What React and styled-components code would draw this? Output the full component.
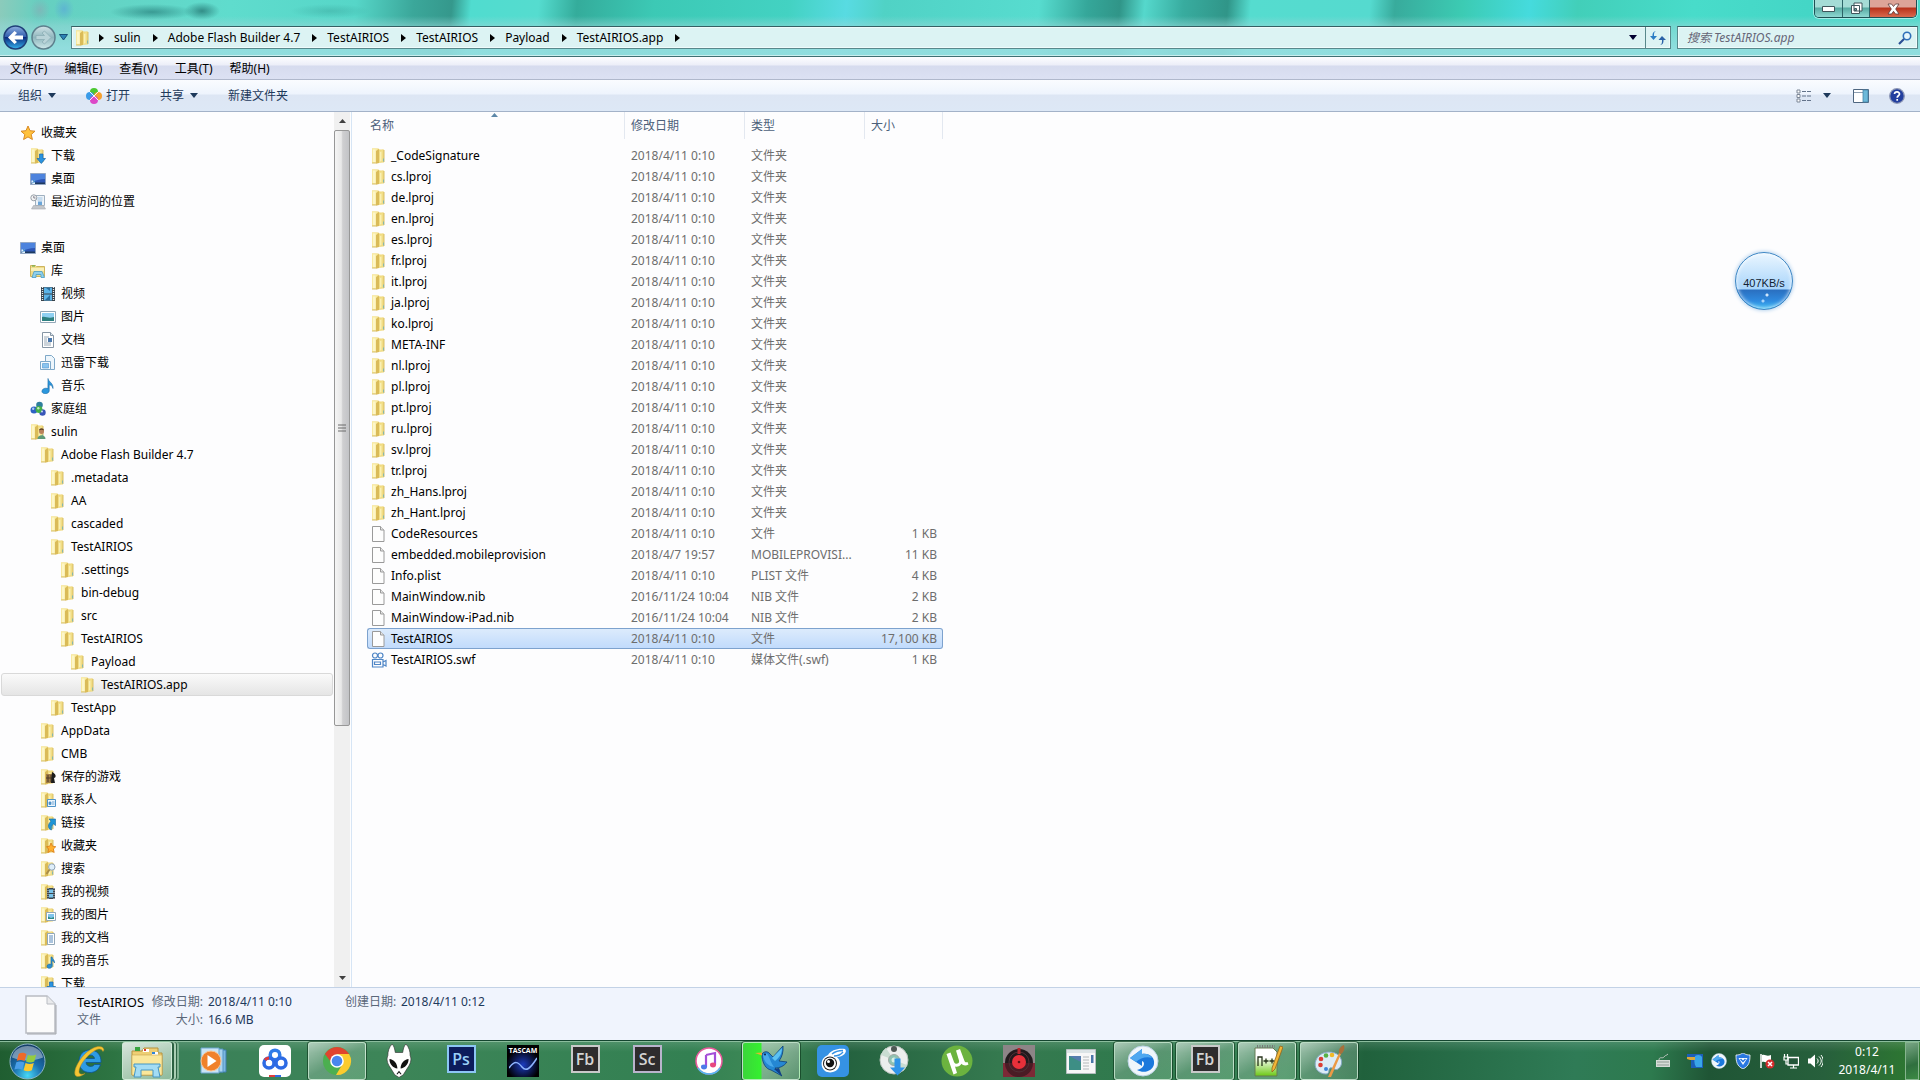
import React from "react";
import styled, { createGlobalStyle, css } from "styled-components";

const GlobalStyle = createGlobalStyle`
  * { box-sizing: border-box; }
  html, body { margin: 0; }
  body, button, input, table {
    font-family: "Noto Sans", "Noto Sans CJK SC", sans-serif;
    font-size: 12px;
    line-height: 16px;
  }
  button { border: 0; padding: 0; background: none; color: inherit; cursor: default; }
  a { color: inherit; text-decoration: none; cursor: default; }
  svg { display: block; flex: none; }
  ul { list-style: none; margin: 0; padding: 0; }
`;

/* ---------- layout ---------- */

const Desktop = styled.div`
  display: flex;
  flex-direction: column;
  height: 100vh;
  overflow: hidden;
  background: #fdfdfe;
  color: #000;
`;

const Glass = styled.header`
  display: flex;
  flex-direction: column;
  padding-bottom: 6px;
  border-bottom: 1px solid #3e6f73;
  box-shadow: inset 0 -1px 0 #c9eeee;
  background:
    linear-gradient(180deg, transparent 0 16px, rgba(150, 215, 215, 0.55) 26px, rgba(150, 222, 224, 0.9) 48px),
    radial-gradient(ellipse 42px 8px at 152px 12px, rgba(25, 105, 105, 0.55), transparent),
    radial-gradient(ellipse 18px 9px at 202px 11px, rgba(20, 90, 90, 0.6), transparent),
    radial-gradient(ellipse 10px 12px at 64px 9px, rgba(90, 170, 215, 0.7), transparent),
    radial-gradient(ellipse 10px 12px at 40px 10px, rgba(140, 170, 180, 0.6), transparent),
    radial-gradient(ellipse 40px 7px at 330px 11px, rgba(35, 125, 120, 0.25), transparent),
    linear-gradient(95deg, #8ccbbb 0, #66cfc0 2%, #5fdccd 12%, #56d6c8 18.500%, #3ba79a 21.500%, #35988c 23.500%,
      #50dccf 24.500%, #55dccf 28%, #34ac9b 30%, #3cc9b5 34%, #43d2c2 41%, #58dbe2 44%, #50d2c5 46%,
      #57dccf 54%, #35a79a 56.500%, #309588 58.200%, #55d8cc 59.500%, #38ac9f 61.500%, #309588 63.800%, #55dccf 65%,
      #55dacf 71.200%, #38ab9c 72.500%, #3ccbb3 76%, #45dbdd 79.500%, #42cfb9 82%, #48dcca 88%, #44d6c6 94%, #4adac9 100%);
`;

const CaptionRow = styled.div`
  display: flex;
  justify-content: flex-end;
  height: 25px;
  padding-right: 3px;
`;

const Caption = styled.div`
  display: flex;
  height: 18px;
  border: 1px solid #1f5054;
  border-top: 0;
  border-radius: 0 0 5px 5px;
  box-shadow: 0 0 0 1px rgba(220, 250, 250, 0.6);
  overflow: hidden;
`;

const CaptionButton = styled.button`
  display: grid;
  place-items: center;
  width: ${(p) => (p.$close ? 47 : 27)}px;
  background: ${(p) =>
    p.$close
      ? "linear-gradient(#dda498 0 7px, #b8321b 8px, #d9694d)"
      : "linear-gradient(#a5dcd6 0 7px, #57aaa2 8px, #8fd8d2)"};
  & + & { border-left: 1px solid #2d6468; }
`;

const NavRow = styled.div`
  display: flex;
  align-items: center;
  height: 25px;
  padding: 0 2px 0 3px;
`;

const RoundButton = styled.button`
  display: grid;
  place-items: center;
  width: 25px;
  height: 25px;
  margin-right: 3px;
`;

const fieldBox = css`
  display: flex;
  align-items: center;
  height: 23px;
  border: 1px solid #58888b;
  border-top-color: #355f63;
  background: #dcf3f3;
  box-shadow: inset 0 0 0 1px #effbfb;
`;

const Address = styled.nav`
  ${fieldBox}
  flex: 1;
  margin-left: 3px;
  padding-left: 3px;
`;

const Crumbs = styled.ul`
  display: flex;
  flex: 1;
  align-items: center;
`;

const Crumb = styled.li`
  display: flex;
  align-items: center;
  gap: 12px;
  padding-left: 10px;
  &:first-child { padding-left: 8px; }
`;

const SquareButton = styled.button`
  display: grid;
  place-items: center;
  width: 25px;
  height: 21px;
  ${(p) => p.$divided && "border-left: 1px solid #58888b;"}
`;

const SearchBox = styled.label`
  ${fieldBox}
  width: 241px;
  margin-left: 6px;
  padding: 0 5px 0 9px;
`;

const SearchInput = styled.input`
  flex: 1;
  min-width: 0;
  border: 0;
  padding: 0;
  outline: 0;
  background: none;
  font-style: italic;
  &::placeholder { color: #667; opacity: 1; }
`;

const MenuBar = styled.nav`
  display: flex;
  align-items: center;
  gap: 17px;
  height: 23px;
  padding: 1px 10px 0;
  border-bottom: 1px solid #b0b8cc;
  background: linear-gradient(#fdfdff 0, #eceef8 8px, #d6dbee 9px, #dce1f3 100%);
`;

const ToolBar = styled.div`
  display: flex;
  align-items: center;
  height: 32px;
  padding: 0 15px 0 18px;
  border-bottom: 1px solid #a3b2c8;
  background: linear-gradient(#fafcff 0, #eef4fd 14px, #dde6f4 15px, #dde8f6 100%);
  color: #1e395b;
`;

const ToolButton = styled.button`
  display: flex;
  align-items: center;
  gap: ${(p) => p.$gap || 4}px;
  margin-right: ${(p) => p.$after || 0}px;
`;

const Spacer = styled.div`
  flex: 1;
`;

const Main = styled.main`
  display: flex;
  flex: 1;
  min-height: 0;
`;

/* ---------- folder tree ---------- */

const TreePane = styled.nav`
  width: 334px;
  padding: 9px 1px 0;
  overflow: hidden;
`;

const TreeItem = styled.li`
  height: 23px;
  ${(p) => p.$spaced && "margin-bottom: 23px;"}
`;

const TreeLink = styled.a`
  display: flex;
  align-items: center;
  gap: 5px;
  height: 23px;
  padding-left: ${(p) => 18 + p.$level * 10}px;
  border: 1px solid transparent;
  border-radius: 3px;
  ${(p) =>
    p.$current &&
    css`
      border-color: #d9d9d9;
      background: linear-gradient(#fafafa, #e5e5e5);
    `}
`;

const ScrollBar = styled.div`
  display: flex;
  flex-direction: column;
  align-items: stretch;
  width: 16px;
  background: #f0f0f0;
`;

const ScrollArrow = styled.button`
  display: grid;
  place-items: center;
  height: 18px;
`;

const ScrollTrack = styled.div`
  flex: 1;
`;

const ScrollThumb = styled.div`
  display: grid;
  place-items: center;
  height: 71%;
  border: 1px solid #979797;
  border-radius: 2px;
  background: linear-gradient(90deg, #f5f5f5, #e8e8e8 45%, #cfcfd1 55%, #c2c3c6);
`;

/* ---------- file list ---------- */

const FilePane = styled.section`
  flex: 1;
  margin-left: 1px;
  padding-left: 15px;
  border-left: 1px solid #d6e5f5;
`;

const FileTable = styled.table`
  table-layout: fixed;
  width: 576px;
  border-collapse: separate;
  border-spacing: 0;
`;

const Th = styled.th`
  height: 33px;
  padding: 0;
  vertical-align: top;
  text-align: left;
  font-weight: 400;
  color: #4c607a;
`;

const HeadLabel = styled.div`
  display: flex;
  flex-direction: column;
  height: 27px;
  padding: 1px 6px 0 ${(p) => (p.$first ? 3 : 6)}px;
  border-right: 1px solid #e3e8f0;
`;

const SortMark = styled.span`
  display: flex;
  justify-content: center;
  height: 5px;
`;

const Td = styled.td`
  height: 21px;
  padding: 0 6px;
  overflow: hidden;
  text-overflow: ellipsis;
  white-space: nowrap;
  text-align: ${(p) => (p.$right ? "right" : "left")};
  color: #6d6d6d;
  ${(p) => p.$name && "padding-left: 4px; color: #000;"}
`;

const Tr = styled.tr`
  ${(p) =>
    p.$selected &&
    css`
      td {
        border: 1px solid #7da2ce;
        border-width: 1px 0;
        background: linear-gradient(#dcebfc, #c1dbfc);
      }
      td:first-child { border-left-width: 1px; border-radius: 3px 0 0 3px; padding-left: 3px; }
      td:last-child { border-right-width: 1px; border-radius: 0 3px 3px 0; padding-right: 5px; }
    `}
`;

const NameCell = styled.span`
  display: flex;
  align-items: center;
  gap: 4px;
`;

/* ---------- details ---------- */

const Details = styled.footer`
  display: flex;
  height: 54px;
  padding: 6px 24px;
  border-top: 1px solid #c3d2e6;
  background: #f0f4fd;
  color: #1e395b;
`;

const Facts = styled.dl`
  display: grid;
  grid-template-columns: 68px 53px 132px 51px auto;
  column-gap: 5px;
  row-gap: 2px;
  margin: 0 0 0 20px;
  align-content: start;
`;

const Fact = styled.dd`
  margin: 0;
  white-space: nowrap;
  ${(p) => p.$title && "color: #000; font-size: 13px;"}
  ${(p) => p.$dim && "color: #5a6779;"}
`;

const FactName = styled.dt`
  text-align: right;
  white-space: nowrap;
  color: #5a6779;
`;

/* ---------- speed ball ---------- */

const SpeedBall = styled.div`
  position: absolute;
  top: 252px;
  right: 127px;
  display: grid;
  place-items: center;
  width: 58px;
  height: 58px;
  padding-top: 4px;
  border: 1px solid #3d86c4;
  border-radius: 50%;
  box-shadow: 0 0 4px #9ac3e8, inset 0 0 4px #fff;
  background:
    radial-gradient(circle at 31px 42px, #cfe6fb 0 1px, transparent 2px),
    radial-gradient(circle at 27px 48px, #a9d4fa 0 1px, transparent 2px),
    linear-gradient(#eaf6ff 0, #a9d5fb 36px, #2a6fc0 37px, #2f8be0 48px, #41bdf3 100%);
  color: #123;
  font-family: "Liberation Sans", Arial, sans-serif;
  font-size: 11px;
`;

/* ---------- taskbar ---------- */

const TaskBar = styled.footer`
  display: flex;
  height: 39px;
  border-top: 1px solid #8bbd9d;
  box-shadow: 0 -1px 0 #14452f;
  z-index: 1;
  background:
    linear-gradient(180deg, rgba(255, 255, 255, 0.12), transparent 10px),
    linear-gradient(95deg, #1f5d30 0, #2d7442 6%, #3a8058 9%, #3d8558 20%, #338052 36%, #3f8a57 40%, #24623f 44%,
      #35794f 52%, #2f7a4d 60%, #3b8557 67%, #20613c 71%, #2f7b56 82%, #2d7a4e 86%, #1f5535 89%, #27603c 95%, #2e7a30 100%);
  color: #fff;
`;

const StartButton = styled.button`
  display: grid;
  place-items: center;
  width: 58px;
  padding-right: 4px;
`;

const TaskButton = styled.button`
  display: grid;
  place-items: center;
  width: 58px;
  margin: 0 2px;
  ${(p) =>
    p.$open &&
    css`
      border: 1px solid rgba(214, 240, 220, 0.75);
      border-radius: 3px;
      box-shadow: 0 0 0 1px rgba(10, 50, 25, 0.6);
      background: linear-gradient(150deg, rgba(255, 255, 255, 0.55), rgba(255, 255, 255, 0.2) 50%, rgba(190, 240, 200, 0.25));
    `}
  ${(p) =>
    p.$stack &&
    css`
      width: 50px;
      margin-right: 10px;
      background: linear-gradient(150deg, rgba(255, 255, 255, 0.8), rgba(225, 245, 225, 0.5));
      box-shadow: 2px 0 0 #2c6142, 4px 0 0 #a9ceb3, 5px 0 0 #2c6142, 7px 0 0 #7fb191;
    `}
  ${(p) =>
    p.$busy &&
    css`
      background:
        linear-gradient(90deg, #3bd53b 0, #35f02f 18px, transparent 19px),
        linear-gradient(150deg, rgba(255, 255, 255, 0.5), rgba(255, 255, 255, 0.2));
    `}
`;

const Badge = styled.span`
  display: grid;
  place-items: center;
  width: 29px;
  height: 28px;
  margin-bottom: 4px;
  border: 2px solid ${(p) => p.$line};
  background: ${(p) => p.$fill};
  color: ${(p) => p.$ink};
  font-family: "Open Sans", sans-serif;
  font-size: 16px;
  font-weight: 600;
`;

const Tascam = styled.span`
  display: flex;
  flex-direction: column;
  align-items: center;
  width: 32px;
  height: 32px;
  background: radial-gradient(circle at 50% 62%, #1c3cc0, #000 65%);
  color: #fff;
  font: 700 7px/11px "Open Sans", sans-serif;
`;

const Tray = styled.div`
  display: flex;
  align-items: center;
  gap: 8px;
`;

const TrayButton = styled.button`
  width: 16px;
  height: 16px;
  &:first-child { margin-right: 8px; }
`;

const Clock = styled.button`
  width: 82px;
  padding-left: 6px;
  line-height: 18px;
  text-align: center;
`;

const ShowDesktop = styled.button`
  width: 14px;
  margin-right: 1px;
  border: 1px solid #86b58e;
  background: linear-gradient(160deg, #79a585, #2f6f3e 60%, #3c8a44);
`;

/* ---------- drawings ---------- */

const Svg = ({ s = 16, children, v = 16 }) => (
  <svg width={s} height={s} viewBox={`0 0 ${v} ${v}`} aria-hidden="true">{children}</svg>
);

const FolderShape = () => (
  <>
    <path d="M1 .5h6.500l1 1h4.500v13H1z" fill="#efd87c" />
    <path d="M1 .5h5.500v14.500H1z" fill="#f8eaa0" />
    <path d="M2 1.500h2.500v12.500H2z" fill="#fdf6c9" />
    <path d="M5 3l3-2v14l-3 .8z" fill="#dabb58" />
    <path d="M8 3l4-1.500v12.500L8 15z" fill="#f1dd85" />
    <path d="M9 4l1.500-.6v9.500L9 13.500z" fill="#faf0b4" />
    <path d="M13 2v12M1 15h4" stroke="#d8bf69" />
    <path d="M12.500 10.500v3" stroke="#86b7ad" />
  </>
);

const overlays = {
  download: <path d="M9.500 6h3.500v4.500h2.500L11.300 15.500 7 10.500h2.500z" fill="#2a93e0" stroke="#1767ad" strokeWidth=".7" />,
  user: <><circle cx="11.500" cy="7.500" r="2.500" fill="#b9825d" /><path d="M7.500 15c0-5 8-5 8 0z" fill="#5d9a78" /><path d="M9 6.500c0-3 5-3 5 0-2-1-3-1-5 0z" fill="#5b3c22" /></>,
  game: <><path d="M6 5h7v9H6z" fill="#a07c46" /><path d="M8 6v7M11 6v7M6 9h7" stroke="#4a3826" /><path d="M12 3c5 2 4 6 2 6l1 5h-4z" fill="#1c1c1c" /></>,
  contact: <><path d="M7.500 7.500h8v7h-8z" fill="#eef6fd" stroke="#4e93c8" /><path d="M9 10h2v2.500H9zM12 10h2.500M12 12h2.500" fill="#4e93c8" stroke="#4e93c8" strokeWidth=".8" /></>,
  link: <path d="M9 4h6.500v6.500L13.500 9c-2 1.500-2.500 3-2 6-4-1-4-6-.5-8.800z" fill="#1f95d6" stroke="#126a9f" strokeWidth=".6" />,
  star: <path d="M11 5l1.500 3.200 3.300.5-2.400 2.300.8 3.500-3.200-1.700-3 1.700.6-3.500L6.500 8.700 9.700 8.200z" fill="#ffb02e" stroke="#d97a14" strokeWidth=".8" />,
  search: <><circle cx="11.800" cy="6" r="3.200" fill="#dfeefa" stroke="#8fa3b5" /><path d="M9.500 8.500L6.500 13" stroke="#a88c4a" strokeWidth="2" /></>,
  video: <><path d="M7 4h8v11H7z" fill="#3b4650" /><path d="M9 5.500h4v3.500H9zM9 10h4v3.500H9z" fill="#79c3ea" /><path d="M8 4v11M14 4v11" stroke="#dfe6ea" strokeWidth=".9" strokeDasharray="1 1" /></>,
  picture: <><path d="M6.500 5.500h9v8h-9z" fill="#fff" stroke="#93a8b8" /><path d="M8 7h6v5H8z" fill="#7fc4ec" /><path d="M8 12V9.500l3 1.500 3-1v2z" fill="#2d8b8a" /></>,
  doc: <><path d="M7.500 3.500h7v11h-7z" fill="#fff" stroke="#93a8b8" /><path d="M9 6h4M9 8h4M9 10h4M9 12h4" stroke="#5688bb" /></>,
  music: <path d="M12 4c.3 2 3 3 2.500 6-.5-1.500-1.500-2-2.500-2.200V13c0 3-5 3-5 .5s3-3 4-2V4z" fill="#2c8fd0" stroke="#1b6ba5" strokeWidth=".6" />,
};

const Desk = () => (
  <><path d="M.5 2.500h15v11H.5z" fill="#2d55b4" stroke="#93a7c4" /><path d="M1 3h14v5c-5 0-9 1-14 4z" fill="#4d83dd" /><path d="M1 11.500h14V13H1z" fill="#1e3a5f" /><path d="M1.500 9.500h3.500V13H1.500z" fill="#e3f0fb" /><path d="M2 12.500l2.500-2.500M3 9.800h1.700v1.700" stroke="#2a7ac0" fill="none" /></>
);

const shapes = {
  star: <path d="M8 1l2 4.700 5 .5-3.800 3.300 1.200 5L8 11.900 3.600 14.500l1.200-5L1 6.200l5-.5z" fill="#ffc23d" stroke="#d98a24" strokeLinejoin="round" />,
  desk: <Desk />,
  recent: <><path d="M5.500 1.500h9v10h-9z" fill="#eef3f8" stroke="#9fb0c0" /><path d="M7.500 4h5M7.500 6h5" stroke="#9fc4e4" /><path d="M8 7.500h4v3.500H8z" fill="#6aa5d8" /><path d="M3.500 11.500h10l2 3.500h-14z" fill="#c3c6ca" stroke="#a5a9ae" strokeWidth=".6" /><circle cx="3.800" cy="3.800" r="3" fill="#f4f4f4" stroke="#98a0a8" /><path d="M3.800 2v2h1.700" stroke="#667" fill="none" strokeWidth=".8" /></>,
  library: <><path d="M.5 2.500h5l1 1h8v10H.5z" fill="#f0dc8a" stroke="#cdb45e" /><path d="M2 3h3" stroke="#5aa948" /><path d="M1 5h13v3H1z" fill="#f9efb8" /><path d="M2 14.500l2-6h8l2.500 6h-3.500v-3H6v3z" fill="#8fd0ee" stroke="#4a9cc6" strokeWidth=".8" /></>,
  video: <><path d="M1 1h14v14H1z" fill="#39434c" /><path d="M4 1.500h8v6H4zM4 8.500h8v6H4z" fill="#5cb4e8" /><path d="M6 2l4 3v-3zM5 14l5-5v5z" fill="#2a6e9e" /><path d="M2.500 1v14M13.500 1v14" stroke="#e8eef2" strokeWidth="1.300" strokeDasharray="1 1" /></>,
  picture: <><path d="M.5 2.500h15v11H.5z" fill="#fff" stroke="#93a8b8" /><path d="M2 4h12v8H2z" fill="#8fd0f2" /><path d="M2 12V8c4-1 6 2 12 0v4z" fill="#2d8080" /></>,
  doc: <><path d="M2.500.5h8l3 3v12h-11z" fill="#fff" stroke="#8796a5" /><path d="M10.500.5v3h3" fill="#dde6ee" stroke="#8796a5" /><path d="M4 5h5M4 7h3M4 9h3M4 11h7M4 13h7" stroke="#9aa8b5" /><path d="M8 6h4v4H8z" fill="#4a78ad" /></>,
  thunder: <><path d="M5.500.5h6l3 3v11h-9z" fill="#eef6fc" stroke="#7ea8c8" /><path d="M.5 6.500h10v8H.5z" fill="#f6fafd" stroke="#7ea8c8" /><path d="M2.500 8.500h6v4.500h-6z" fill="#8ac4ef" stroke="#4d94cf" strokeWidth=".6" /></>,
  music: <path d="M8 .5c.5 3.500 5.500 4.500 5 10-.8-3-2.500-3.500-3.800-3.700V13c-.3 3.500-7.500 3.500-7.300.2.200-2.600 3.600-3.700 6-2.600z" fill="#2b97dd" stroke="#1c6ba6" strokeWidth=".6" />,
  home: <><circle cx="4" cy="9" r="3.500" fill="#2d62c4" /><circle cx="9.500" cy="4" r="3.300" fill="#2f7f9d" /><circle cx="12.500" cy="11.500" r="3.200" fill="#3856b8" /><circle cx="9" cy="8.500" r="3.400" fill="#44b04a" /><circle cx="3.200" cy="7.800" r="1.200" fill="#aecbf6" /><circle cx="8.300" cy="7.300" r="1.200" fill="#c3ecbb" /><circle cx="12" cy="10.500" r="1" fill="#c8d2f8" /></>,
  file: <><path d="M1.500.5h8l3.500 3.500v11.500H1.500z" fill="#fdfdfd" stroke="#9a9a9a" /><path d="M9.500.5v3.500H13" fill="#e6e6e6" stroke="#9a9a9a" /></>,
  swf: <g fill="none" stroke="#4f86c6" strokeWidth="1.200"><circle cx="4" cy="3.500" r="2.500" /><circle cx="9.500" cy="3.500" r="2.500" /><path d="M1.500 7.500h10.500v7.500H1.500zM3.500 10h6v2.500h-6zM12 10l3-1.500v5.500l-3-1.500" /></g>,
};

const Icon = ({ name }) => {
  if (name === "folder") return <Svg><FolderShape /></Svg>;
  if (name.startsWith("f:")) return <Svg><FolderShape />{overlays[name.slice(2)]}</Svg>;
  return <Svg>{shapes[name]}</Svg>;
};

const Caret = ({ color = "#1e395b" }) => (
  <svg width="8" height="5" viewBox="0 0 8 5" aria-hidden="true"><path d="M0 0h8L4 5z" fill={color} /></svg>
);
const CrumbArrow = () => (
  <svg width="5" height="8" viewBox="0 0 5 8" aria-hidden="true"><path d="M0 0l5 4-5 4z" fill="#000" /></svg>
);

const BackIcon = () => (
  <Svg s={25} v={25}>
    <defs><linearGradient id="bk" x2="0" y2="1"><stop stopColor="#8fb0e0" /><stop offset=".48" stopColor="#2f5cad" /><stop offset=".5" stopColor="#0b2d80" /><stop offset="1" stopColor="#35b3ee" /></linearGradient></defs>
    <circle cx="12.500" cy="12.500" r="11.500" fill="url(#bk)" stroke="#1f3f78" strokeWidth="1.500" />
    <path d="M5 12.500l6.500-6.500 2.500 2-2.500 2.500H20v4h-8.500L14 17l-2.500 2z" fill="#fff" />
  </Svg>
);
const ForwardIcon = () => (
  <Svg s={25} v={25}>
    <defs><linearGradient id="fw" x2="0" y2="1"><stop stopColor="#d3e4e8" /><stop offset=".5" stopColor="#8fb6bd" /><stop offset="1" stopColor="#cfe8ea" /></linearGradient></defs>
    <circle cx="12.500" cy="12.500" r="11.500" fill="url(#fw)" stroke="#5d7f8c" strokeWidth="1.500" />
    <path d="M20 12.500L13.500 6 11 8l2.500 2.500H5v4h8.500L11 17l2.500 2z" fill="#b9d3d8" stroke="#8cadb5" strokeWidth=".8" />
  </Svg>
);

const StartOrb = () => (
  <Svg s={37} v={38}>
    <defs><radialGradient id="orb" cx=".5" cy=".9" r=".9"><stop stopColor="#47d8f5" /><stop offset=".45" stopColor="#1a6fae" /><stop offset="1" stopColor="#123a63" /></radialGradient></defs>
    <circle cx="19" cy="19" r="18" fill="url(#orb)" stroke="#8fb5c8" />
    <path d="M3 15C6-1 32-1 35 15 25 19 13 19 3 15z" fill="#fff" opacity=".4" />
    <path d="M10 11c3-1.500 5-1.200 8 .3l-2 7.200c-3-1.400-5-1.300-8-.2z" fill="#ee6a2a" />
    <path d="M19.500 12c3 1.400 5 1.200 8.500-.3l-2 7.300c-3 1.300-5.500 1.300-8.500-.1z" fill="#95cc3f" />
    <path d="M7.500 19.800c3-1.300 5-1.200 8.200.2l-2 7.400c-3-1.400-5-1.400-8.200-.2z" fill="#4a9ee8" />
    <path d="M17 20.500c3 1.300 5.500 1.300 8.500 0l-2 7.500c-3 1.200-5.500 1.200-8.500-.1z" fill="#fbc92e" />
  </Svg>
);

const IE = () => (
  <Svg s={34} v={34}>
    <path d="M18 6c7 0 11.500 5 11 12.500H14c.3 4.500 7 5 8.500 2h6c-2 6-6 8-10.500 8C11 28.500 7 24 7 17.500S11 6 18 6zm-4 8.500h8.500c-.3-4.500-8-4.500-8.500 0z" fill="#2e9be4" stroke="#0d5391" strokeWidth=".8" />
    <path d="M32 6C31 0 21 2 13 10 4 19 0 31 5 32.500c3 .5 6-1.500 8-3-4 1.500-6 .5-6-2 0-5 6-14 13-19 5-4 9-5 11-1z" fill="#f4c534" stroke="#b58a1d" strokeWidth=".5" />
  </Svg>
);
const Explorer = () => (
  <Svg s={34} v={34}>
    <path d="M2 7h10l2-3h14v5h4v22H2z" fill="#eecf74" stroke="#b6923c" />
    <path d="M5 3h5v4H5z" fill="#37a43f" /><path d="M13 5h6v3h-6z" fill="#fff" /><path d="M14 5h2v2h-2z" fill="#d8342c" /><path d="M22 8h6v3h-6z" fill="#fff" /><path d="M22 8h3v2h-3z" fill="#3084d8" />
    <path d="M2 11h30v20H2z" fill="#fae79b" stroke="#c9a54d" strokeWidth=".6" />
    <path d="M4 20h26v3h-2l2 10h-7v-7H11v7H4l2-10H4z" fill="#a3dcf4" stroke="#4596c3" />
  </Svg>
);
const MediaPlayer = () => (
  <Svg s={30} v={30}>
    <path d="M10 4h18v22H10z" fill="#7cb8e0" stroke="#3f7eb0" /><path d="M7 3h18v23H7z" fill="#a9d4ef" stroke="#5594c2" /><path d="M3 2h18v25H3z" fill="#c9e4f5" stroke="#6ba6cf" />
    <circle cx="13" cy="15" r="10" fill="#f0812b" stroke="#f8c493" /><path d="M9.500 9l9 6-9 6z" fill="#fff" />
  </Svg>
);
const Baidu = () => (
  <Svg s={32} v={32}>
    <rect width="32" height="32" rx="5" fill="#fff" />
    <g fill="none" strokeWidth="3.500"><circle cx="16" cy="10" r="4.800" stroke="#2f7be8" /><circle cx="10" cy="18" r="5" stroke="#2d6be4" /><circle cx="22" cy="18" r="5" stroke="#2d6be4" /></g>
    <path d="M6 15a5 5 0 014-2" stroke="#e03c3c" strokeWidth="3" fill="none" /><path d="M10 30h6v2h-6z" fill="#e03c3c" /><path d="M16 30h6v2h-6z" fill="#2d6be4" />
  </Svg>
);
const Chrome = () => (
  <Svg s={30} v={30}>
    <circle cx="15" cy="15" r="14" fill="#4caf50" />
    <path d="M2.900 8A14 14 0 0115 29l5-9-5-5z" fill="#3fa757" />
    <path d="M27.100 8A14 14 0 0114 29l6.500-11L15 8z" fill="#fccb2e" /><path d="M2.900 8A14 14 0 0127.100 8H15l-6 8z" fill="#e0442f" />
    <circle cx="15" cy="15" r="6.800" fill="#fff" /><circle cx="15" cy="15" r="5.300" fill="#4a86ee" />
  </Svg>
);
const Foobar = () => (
  <Svg s={34} v={32}>
    <path d="M9.500 0c2 2 2.500 5 3 8h7c.5-3 1-6 3-8 3 3 4 7 4 11 1.500 3 .5 7-1.500 10l-5 8-4 2.500-4-2.500-5-8c-2-3-3-7-1.500-10 0-4 1-8 4-11z" fill="#fff" stroke="#333" strokeWidth=".6" />
    <path d="M7 14c4 .5 7.500 4 7.500 9-4-.5-7.500-4-7.500-9zM25 14c-4 .5-7.500 4-7.500 9 4-.5 7.500-4 7.500-9z" fill="#111" /><path d="M14 28.500l2-2.500 2 2.500" fill="none" stroke="#111" />
  </Svg>
);
const ITunes = () => (
  <Svg s={30} v={30}>
    <circle cx="15" cy="15" r="13" fill="#fff" stroke="#e85a9c" strokeWidth="1.500" /><path d="M4 22a13 13 0 0022 0" fill="none" stroke="#53b9f3" strokeWidth="1.500" />
    <path d="M12 9l9-2v12M12 9v12" stroke="#a44ed8" strokeWidth="2.200" fill="none" /><ellipse cx="10" cy="21" rx="3" ry="2.400" fill="#4d7be8" /><ellipse cx="19" cy="19" rx="3" ry="2.400" fill="#e8487f" />
  </Svg>
);
const Bird = () => (
  <Svg s={34} v={34}>
    <path d="M8 10c2-3 6-3 8 0l3 3L29 2c.5 6-1 11-4 15l8 1c-3 4-7 6-12 6l7 8-11-6c-5-1-8-6-9-13z" fill="#2587d3" stroke="#0c3f77" strokeWidth=".8" />
    <path d="M18 14L28 4c0 5-2 9-7 13z" fill="#5cc2f2" /><path d="M9 11c2-2 4-2 5 0 2 4 3 8 6 12-6-1-10-5-11-12z" fill="#49a9ea" />
    <path d="M1 9l7-.5v3z" fill="#e8b030" /><path d="M20 25l8 7-3-8z" fill="#123f86" /><circle cx="11" cy="10.500" r="1" fill="#0a2450" />
  </Svg>
);
const Eye = () => (
  <Svg s={32} v={32}>
    <rect width="32" height="32" rx="5" fill="#3592e4" />
    <path d="M11 10c3-5 10-7 17-6 3 3-2 8-8 8 3 3 4 6 2 10-2 5-9 7-14 4-5-4-5-13 3-16z" fill="#fff" />
    <circle cx="13" cy="18.500" r="7" fill="#222" /><circle cx="13" cy="18.500" r="6" fill="#fff" /><circle cx="13" cy="18" r="4.200" fill="#111" /><circle cx="11.500" cy="16.500" r="1.500" fill="#fff" />
    <path d="M15 9c3-2.500 7-3.500 11-3.500M17 11c4 0 7-1.500 9-4" stroke="#3592e4" strokeWidth="1.400" fill="none" />
  </Svg>
);
const Disc = () => (
  <Svg s={32} v={32}>
    <circle cx="15" cy="15" r="14" fill="#eceeed" stroke="#b9c2bd" /><path d="M15 15L2 10a14 14 0 015-7zM15 15l13 5a14 14 0 01-4 6z" fill="#c9dcd2" />
    <circle cx="15" cy="15" r="5.500" fill="#8fc2b2" stroke="#a0aaa4" /><circle cx="15" cy="15" r="2.500" fill="#d8efe5" /><circle cx="15" cy="4" r="3" fill="#4e5854" />
    <path d="M15.500 13.500h6v9h4.500l-7.500 8-7.500-8h4.500z" fill="#2f94e8" />
  </Svg>
);
const UTorrent = () => (
  <Svg s={32} v={32}>
    <circle cx="16" cy="16" r="15.500" fill="#6cb33f" />
    <path d="M5.500 9l4-1.500 3.500 9.500c1 3 6 2 5-1.500L15 5.500l4-1.500 4.500 12c.5 1.500 1.500 1.500 3 1l1 2.500c-3 1.500-5.500 1-7-.8-1.500 2.500-4 3.500-6.500 2.800L16 28l-3.500 1.500z" fill="#fff" />
  </Svg>
);
const RedDisc = () => (
  <Svg s={32} v={32}>
    <path d="M0 0h32v32H0z" fill="#8d8587" /><path d="M0 18h32v14H0z" fill="#7c2936" /><path d="M2 18a14 14 0 0128 0z" fill="#221a1d" /><path d="M2 18a14 14 0 0028 0z" fill="#4a1c25" /><circle cx="16" cy="17" r="10" fill="none" stroke="#503036" />
    <circle cx="16" cy="17" r="7" fill="#e8303a" /><circle cx="16" cy="17" r="1.300" fill="#5e1117" /><path d="M14.500 3h3v6h-3z" fill="#b5262e" />
  </Svg>
);
const WindowIcon = () => (
  <Svg s={30} v={30}>
    <path d="M.5 3.500h29v24H.5z" fill="#f7f7f7" stroke="#b6bfc1" /><path d="M1 4h28v3H1z" fill="#dce4e6" /><path d="M3 10h12v14H3z" fill="#3d8e85" /><path d="M3 10h12v6z" fill="#557dae" />
    <path d="M17 11h6M17 14h6M17 17h6M17 20h6M17 23h6" stroke="#b4b9bb" /><path d="M25 9h2.500v8H25z" fill="#4a76a8" />
  </Svg>
);
const BlueSwirl = ({ s = 32 }) => (
  <Svg s={s} v={32}>
    <circle cx="16" cy="16" r="15" fill="#f0f6fb" stroke="#bcd3e6" /><path d="M3 13L15 4v5c8-1 13 4 12 10-1 7-10 10-17 6 7-1 9-8 5-9v5z" fill="#1b78dc" /><path d="M3 13L15 4v5c5-1 8 1 10 4-5-2-12 0-16 4z" fill="#4fa8f0" />
  </Svg>
);
const Notepad = () => (
  <Svg s={32} v={32}>
    <defs><linearGradient id="np" x2="0" y2="1"><stop offset=".35" stopColor="#fff" /><stop offset="1" stopColor="#6cc914" /></linearGradient></defs>
    <path d="M4 3h18l4 4v24H4z" fill="url(#np)" stroke="#667d55" /><path d="M6 1.500h18" stroke="#777" strokeWidth="3" strokeDasharray="1 1.500" />
    <path d="M7 21v-9h4v9M12.500 16h5m-2.500-2.500v5M18.500 16h5m-2.500-2.500v5" stroke="#27331b" strokeWidth="1.300" fill="none" /><path d="M29 1l3 1-8 22-3 3v-4z" fill="#f2b637" stroke="#94641a" strokeWidth=".8" />
  </Svg>
);
const Paint = () => (
  <Svg s={34} v={34}>
    <path d="M4 16c3-8 14-10 21-6 6 4 6 12 1 15-3 2-5-2-8-1-2 1 0 6-4 6C6 30 1 23 4 16z" fill="#dcecf6" stroke="#86a9c2" />
    <circle cx="9" cy="15" r="2.300" fill="#da3f36" /><circle cx="14" cy="11.500" r="2.300" fill="#56b244" /><circle cx="20" cy="11" r="2.300" fill="#f0b928" /><circle cx="8.500" cy="21" r="2.300" fill="#da3f36" /><circle cx="14" cy="25" r="2" fill="#3d85d9" />
    <path d="M27 9l2 1-10 23h-3z" fill="#eb9a45" /><path d="M27 9c-1-4 2-7 5-8 1 3 0 7-3 9z" fill="#a8703b" />
  </Svg>
);

/* ---------- data ---------- */

const tree = [
  [0, "star", "收藏夹"], [1, "f:download", "下载"], [1, "desk", "桌面"], [1, "recent", "最近访问的位置", "gap"],
  [0, "desk", "桌面"], [1, "library", "库"], [2, "video", "视频"], [2, "picture", "图片"], [2, "doc", "文档"],
  [2, "thunder", "迅雷下载"], [2, "music", "音乐"], [1, "home", "家庭组"], [1, "f:user", "sulin"],
  [2, "folder", "Adobe Flash Builder 4.7"], [3, "folder", ".metadata"], [3, "folder", "AA"], [3, "folder", "cascaded"],
  [3, "folder", "TestAIRIOS"], [4, "folder", ".settings"], [4, "folder", "bin-debug"], [4, "folder", "src"],
  [4, "folder", "TestAIRIOS"], [5, "folder", "Payload"], [6, "folder", "TestAIRIOS.app", "current"],
  [3, "folder", "TestApp"], [2, "folder", "AppData"], [2, "folder", "CMB"], [2, "f:game", "保存的游戏"],
  [2, "f:contact", "联系人"], [2, "f:link", "链接"], [2, "f:star", "收藏夹"], [2, "f:search", "搜索"],
  [2, "f:video", "我的视频"], [2, "f:picture", "我的图片"], [2, "f:doc", "我的文档"], [2, "f:music", "我的音乐"],
  [2, "f:download", "下载"],
];

const folders = ["_CodeSignature", "cs.lproj", "de.lproj", "en.lproj", "es.lproj", "fr.lproj", "it.lproj", "ja.lproj",
  "ko.lproj", "META-INF", "nl.lproj", "pl.lproj", "pt.lproj", "ru.lproj", "sv.lproj", "tr.lproj", "zh_Hans.lproj", "zh_Hant.lproj"];

const files = [
  ...folders.map((n) => ["folder", n, "2018/4/11 0:10", "文件夹", ""]),
  ["file", "CodeResources", "2018/4/11 0:10", "文件", "1 KB"],
  ["file", "embedded.mobileprovision", "2018/4/7 19:57", "MOBILEPROVISI...", "11 KB"],
  ["file", "Info.plist", "2018/4/11 0:10", "PLIST 文件", "4 KB"],
  ["file", "MainWindow.nib", "2016/11/24 10:04", "NIB 文件", "2 KB"],
  ["file", "MainWindow-iPad.nib", "2016/11/24 10:04", "NIB 文件", "2 KB"],
  ["file", "TestAIRIOS", "2018/4/11 0:10", "文件", "17,100 KB"],
  ["swf", "TestAIRIOS.swf", "2018/4/11 0:10", "媒体文件(.swf)", "1 KB"],
];

const crumbs = ["sulin", "Adobe Flash Builder 4.7", "TestAIRIOS", "TestAIRIOS", "Payload", "TestAIRIOS.app"];
const menus = ["文件(F)", "编辑(E)", "查看(V)", "工具(T)", "帮助(H)"];

const dark = { $line: "#c9c9c9", $fill: "#2e2c2d", $ink: "#d4d4d4" };
const tasks = [
  { n: "Internet Explorer", i: <IE /> },
  { n: "资源管理器", i: <Explorer />, open: true, stack: true },
  { n: "Media Player", i: <MediaPlayer /> },
  { n: "百度网盘", i: <Baidu /> },
  { n: "Chrome", i: <Chrome />, open: true },
  { n: "foobar2000", i: <Foobar /> },
  { n: "Photoshop", i: <Badge $line="#8cc6f4" $fill="#0c1c5c" $ink="#9ad0f8">Ps</Badge> },
  {
    n: "TASCAM",
    i: <Tascam>TASCAM<svg width="28" height="18" viewBox="0 0 28 18"><path d="M0 12c6-8 9-6 13-1s8 2 15-9" stroke="#8db4ff" strokeWidth="1.500" fill="none" /></svg></Tascam>,
  },
  { n: "Flash Builder", i: <Badge {...dark}>Fb</Badge> },
  { n: "Scout", i: <Badge {...dark} $line="#b9b4cc">Sc</Badge> },
  { n: "iTunes", i: <ITunes /> },
  { n: "迅雷", i: <Bird />, open: true, busy: true },
  { n: "影音", i: <Eye /> },
  { n: "光盘", i: <Disc /> },
  { n: "uTorrent", i: <UTorrent /> },
  { n: "唱片", i: <RedDisc /> },
  { n: "窗口", i: <WindowIcon /> },
  { n: "加速器", i: <BlueSwirl />, open: true },
  { n: "Flash Builder 4.7", i: <Badge {...dark}>Fb</Badge>, open: true },
  { n: "Notepad++", i: <Notepad />, open: true },
  { n: "画图", i: <Paint />, open: true },
];

const trayIcons = [
  ["输入法", <Svg><path d="M1 7h14v7H1z" fill="#d5dcd7" /><path d="M2.500 9h11M2.500 12h11" stroke="#4b5b51" strokeDasharray="1 1" /><path d="M4 7c0-4 4-1 5-3s2-1 4-3" stroke="#b9c4bc" fill="none" /></Svg>],
  ["迅雷", <Svg><path d="M0 1h16v14H4V6H0z" fill="#1c5fb8" /><path d="M8 3c3-2 6-1 7 1v10H9c-2-3-2-8-1-11z" fill="#39a5e8" /><path d="M0 4h8v3H3L0 6z" fill="#d8a93b" /></Svg>],
  ["加速器", <BlueSwirl s={16} />],
  ["电脑管家", <Svg><path d="M1 2c5 0 5-1.500 7-2 2 .5 2 2 7 2 0 7-1 11-7 14C2 13 1 9 1 2z" fill="#2a78e0" stroke="#fff" strokeWidth=".8" /><path d="M3.500 5h9L8 12z" fill="#fff" /><path d="M5.500 6L8 8.500 10.500 6" stroke="#2a78e0" strokeWidth="1.500" fill="none" /></Svg>],
  ["操作中心", <Svg><path d="M2 1v14" stroke="#fff" strokeWidth="1.500" /><path d="M3 2c4-1 4 2 9 0v7c-5 2-5-1-9 0z" fill="#fff" /><circle cx="11" cy="11" r="4.500" fill="#d52b2b" /><path d="M9 9l4 4m0-4l-4 4" stroke="#fff" strokeWidth="1.500" /></Svg>],
  ["网络", <Svg><path d="M5 4.500h10.500v7.500H5z" fill="#25563a" stroke="#fff" strokeWidth="1.300" /><path d="M7 15h7M10.500 12v3M1.500 1v3M4.500 1v3M1 4h4v3H1zM3 7v4h2" stroke="#fff" strokeWidth="1.200" fill="none" /></Svg>],
  ["音量", <Svg><path d="M1 5.500h2.500L8 1.500v13L3.500 10.500H1z" fill="#fff" /><path d="M10 5.500c1.500 1.500 1.500 3.500 0 5M12 3.500c3 3 3 6 0 9M14 2c3 4 3 8 0 12" stroke="#fff" fill="none" /></Svg>],
];

export default function App() {
  return (
    <Desktop>
      <GlobalStyle />
      <Glass>
        <CaptionRow>
          <Caption>
            <CaptionButton aria-label="最小化"><svg width="13" height="6"><path d="M.5.500h12v5H.5z" fill="#fff" stroke="#40565c" /></svg></CaptionButton>
            <CaptionButton aria-label="还原"><svg width="13" height="13"><path d="M4 1h8v8H4zM1.500 3.500h8v8h-8z" fill="#fff" stroke="#40565c" /><path d="M4.500 6.500h2v2h-2z" fill="#6ba6a4" stroke="#40565c" /></svg></CaptionButton>
            <CaptionButton $close aria-label="关闭"><svg width="13" height="12"><path d="M1 1h3.500l2 2.500 2-2.500H12L8.700 6l3.300 5H8.500l-2-2.700-2 2.700H1l3.300-5z" fill="#fff" stroke="#5a3a3a" strokeWidth=".8" /></svg></CaptionButton>
          </Caption>
        </CaptionRow>
        <NavRow>
          <RoundButton aria-label="后退"><BackIcon /></RoundButton>
          <RoundButton aria-label="前进"><ForwardIcon /></RoundButton>
          <button aria-label="最近的页面"><svg width="9" height="7"><path d="M.5.500h8L4.500 6z" fill="#2d84b5" stroke="#164f78" /></svg></button>
          <Address aria-label="地址">
            <Icon name="folder" />
            <Crumbs>
              <Crumb><CrumbArrow /></Crumb>
              {crumbs.map((c, i) => (
                <Crumb key={i}><a href="#path">{c}</a><CrumbArrow /></Crumb>
              ))}
            </Crumbs>
            <SquareButton aria-label="以前的位置"><Caret color="#000030" /></SquareButton>
            <SquareButton $divided aria-label="刷新">
              <svg width="16" height="14" viewBox="0 0 16 14"><path d="M6 0C4 1 4 2.500 4 4V5h3L3.500 9 0 5h2.500C2.500 2.500 3 .5 6 0z" fill="#2b7cc4" /><path d="M10 14c2-1 2-2.500 2-4V9H8.500L12 5l4 4h-2.500c0 3-.5 4.500-3.500 5z" fill="#2b62a8" /></svg>
            </SquareButton>
          </Address>
          <SearchBox>
            <SearchInput aria-label="搜索" placeholder="搜索 TestAIRIOS.app" />
            <svg width="14" height="14" viewBox="0 0 14 14" aria-hidden="true"><circle cx="9" cy="5" r="3.700" fill="#e6f6fb" stroke="#2f6fb8" strokeWidth="1.600" /><path d="M6 8l-5 5" stroke="#2a4f94" strokeWidth="2.200" /></svg>
          </SearchBox>
        </NavRow>
      </Glass>

      <MenuBar>{menus.map((m) => <button key={m}>{m}</button>)}</MenuBar>

      <ToolBar>
        <ToolButton $gap={6} $after={30}>组织 <Caret /></ToolButton>
        <ToolButton $after={30}>
          <Svg><ellipse cx="8" cy="4" rx="4" ry="4" fill="#4bc832" /><ellipse cx="4" cy="8" rx="4" ry="4" fill="#3a9be8" /><ellipse cx="12" cy="8" rx="4" ry="4" fill="#f6a12e" /><ellipse cx="8" cy="12" rx="4" ry="4" fill="#dc48c8" /><path d="M4 4l8 8M12 4l-8 8" stroke="#f3f7fd" /></Svg>
          打开
        </ToolButton>
        <ToolButton $gap={6} $after={30}>共享 <Caret /></ToolButton>
        <ToolButton>新建文件夹</ToolButton>
        <Spacer />
        <ToolButton $gap={11} $after={22} aria-label="更改视图">
          <svg width="16" height="14" viewBox="0 0 16 14"><path d="M1 1h3v3H1zM1 5.500h3v3H1zM1 10h3v3H1z" fill="#fff" stroke="#7c8797" /><path d="M6 2.500h10M6 7h10M6 11.500h10" stroke="#63738a" strokeDasharray="4 1" /></svg>
          <Caret />
        </ToolButton>
        <ToolButton $after={20} aria-label="预览窗格">
          <svg width="16" height="14" viewBox="0 0 16 14"><path d="M.5.500h15v13H.5z" fill="#fff" stroke="#4e6680" /><path d="M1 3.500h9" stroke="#8fa0b3" /><path d="M10 1h5v12h-5z" fill="#6cb9d9" stroke="#4787a8" strokeWidth=".8" /></svg>
        </ToolButton>
        <ToolButton aria-label="帮助">
          <Svg><circle cx="8" cy="8" r="7.300" fill="#233f9f" stroke="#8d97b5" strokeWidth="1.300" /><path d="M5.500 6c.2-3 5.200-2.700 5 .2-.2 1.600-2.300 1.600-2.300 3.500M8.200 11v1.700" stroke="#fff" strokeWidth="1.700" fill="none" /></Svg>
        </ToolButton>
      </ToolBar>

      <Main>
        <TreePane aria-label="文件夹">
          <ul>
            {tree.map(([level, icon, label, flag], i) => (
              <TreeItem key={i} $spaced={flag === "gap"}>
                <TreeLink href="#folder" $level={level} $current={flag === "current"}><Icon name={icon} />{label}</TreeLink>
              </TreeItem>
            ))}
          </ul>
        </TreePane>
        <ScrollBar>
          <ScrollArrow aria-label="向上滚动"><svg width="7" height="4"><path d="M0 4h7L3.500 0z" fill="#404040" /></svg></ScrollArrow>
          <ScrollTrack>
            <ScrollThumb><svg width="8" height="8"><path d="M0 1h8M0 4h8M0 7h8" stroke="#6b6b6b" /></svg></ScrollThumb>
          </ScrollTrack>
          <ScrollArrow aria-label="向下滚动"><svg width="7" height="4"><path d="M0 0h7L3.500 4z" fill="#404040" /></svg></ScrollArrow>
        </ScrollBar>
        <FilePane>
          <FileTable>
            <colgroup><col width="258" /><col width="120" /><col width="120" /><col width="78" /></colgroup>
            <thead>
              <tr>
                {["名称", "修改日期", "类型", "大小"].map((h, i) => (
                  <Th key={h} scope="col">
                    <HeadLabel $first={i === 0}>
                      <SortMark>{i === 0 && <svg width="7" height="4"><path d="M0 4h7L3.500 0z" fill="#5d87a8" /></svg>}</SortMark>
                      {h}
                    </HeadLabel>
                  </Th>
                ))}
              </tr>
            </thead>
            <tbody>
              {files.map(([icon, name, date, type, size]) => (
                <Tr key={name} $selected={name === "TestAIRIOS"}>
                  <Td $name><NameCell><Icon name={icon} />{name}</NameCell></Td>
                  <Td>{date}</Td>
                  <Td>{type}</Td>
                  <Td $right>{size}</Td>
                </Tr>
              ))}
            </tbody>
          </FileTable>
        </FilePane>
      </Main>

      <Details>
        <svg width="33" height="41" viewBox="0 0 33 41" aria-hidden="true">
          <path d="M2 2h21l8 8v29H2z" fill="#fbfbfb" stroke="#b9bcc2" strokeWidth="1.500" /><path d="M23 2v8h8" fill="#e9eaec" stroke="#b9bcc2" /><path d="M3 40h29V11" fill="none" stroke="#a3a6ab" />
        </svg>
        <Facts>
          <Fact $title>TestAIRIOS</Fact><FactName>修改日期:</FactName><Fact>2018/4/11 0:10</Fact>
          <FactName>创建日期:</FactName><Fact>2018/4/11 0:12</Fact>
          <Fact $dim>文件</Fact><FactName>大小:</FactName><Fact>16.6 MB</Fact>
        </Facts>
      </Details>

      <TaskBar>
        <StartButton aria-label="开始"><StartOrb /></StartButton>
        {tasks.map((t) => (
          <TaskButton key={t.n} aria-label={t.n} $open={t.open} $stack={t.stack} $busy={t.busy}>{t.i}</TaskButton>
        ))}
        <Spacer />
        <Tray>
          {trayIcons.map(([n, icon]) => <TrayButton key={n} aria-label={n}>{icon}</TrayButton>)}
        </Tray>
        <Clock>0:12<br />2018/4/11</Clock>
        <ShowDesktop aria-label="显示桌面" />
      </TaskBar>

      <SpeedBall>407KB/s</SpeedBall>
    </Desktop>
  );
}
